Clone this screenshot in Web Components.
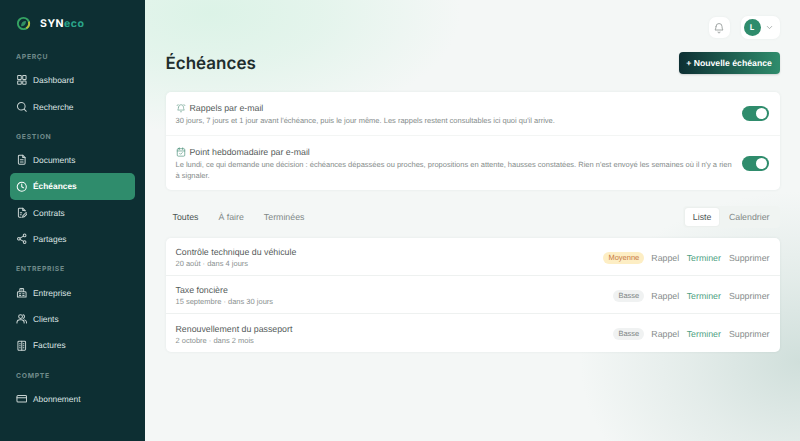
<!DOCTYPE html>
<html lang="fr">
<head>
<meta charset="utf-8">
<title>Échéances</title>
<style>
html, body { margin: 0; height: 100%; }
body { font-family: "Liberation Sans", Arial, sans-serif; overflow: hidden; text-rendering: geometricPrecision; }
</style>
</head>
<body>
<app-shell>
  <side-bar slot="side"></side-bar>
  <top-bar></top-bar>
  <page-head></page-head>
  <settings-card>
    <setting-row icon="bellring" tint="#6a9f8c" label="Rappels par e-mail">30 jours, 7 jours et 1 jour avant l'échéance, puis le jour même. Les rappels restent consultables ici quoi qu'il arrive.</setting-row>
    <setting-row icon="cal" tint="#4a9078" label="Point hebdomadaire par e-mail">Le lundi, ce qui demande une décision : échéances dépassées ou proches, propositions en attente, hausses constatées. Rien n'est envoyé les semaines où il n'y a rien à signaler.</setting-row>
  </settings-card>
  <tab-bar></tab-bar>
  <deadline-list>
    <deadline-row name="Contrôle technique du véhicule" when="20 août · dans 4 jours" level="Moyenne"></deadline-row>
    <deadline-row name="Taxe foncière" when="15 septembre · dans 30 jours" level="Basse"></deadline-row>
    <deadline-row name="Renouvellement du passeport" when="2 octobre · dans 2 mois" level="Basse"></deadline-row>
  </deadline-list>
</app-shell>
<script>
// Icons
const icons = {
  dashboard: `<rect x="3.500" y="3" width="7.500" height="8.500" rx="1"/><rect x="14" y="3" width="7" height="8.500" rx="1"/><rect x="14" y="14.500" width="7" height="7" rx="1"/><rect x="3.500" y="14.500" width="7.500" height="7" rx="1"/>`,
  search: `<circle cx="11" cy="11" r="8"/><path d="M17 17 21.500 21.500"/>`,
  doc: `<path d="M14 2.500H7a2 2 0 0 0-2 2v15a2 2 0 0 0 2 2h10a2 2 0 0 0 2-2V7.500z"/><path d="M14 2.500v5h5M9 12h6M9 16.500h6"/>`,
  clock: `<circle cx="12" cy="12" r="9.500"/><path d="M12 6.500V12l3.500 2"/>`,
  contract: `<path d="M19 8.500V7.500l-5-5H7a2 2 0 0 0-2 2v15a2 2 0 0 0 2 2h4"/><path d="M14 2.500v5h5M21 11.500l-6.500 6.500-1 3.500 3.500-1 6.500-6.500zM9 12h3M9 16h2"/>`,
  share: `<circle cx="18" cy="5" r="2.800"/><circle cx="6" cy="12" r="2.800"/><circle cx="18" cy="19" r="2.800"/><path d="m8.300 10.700 7.400-4.300M8.300 13.300l7.400 4.300"/>`,
  building: `<path d="M3 21v-9a2 2 0 0 1 2-2h14a2 2 0 0 1 2 2v9zM8 10V5a2 2 0 0 1 2-2h4a2 2 0 0 1 2 2v5M7 14h3M14 14h3M7 17.500h3M14 17.500h3M11 6.500h2"/>`,
  users: `<circle cx="9.500" cy="7.500" r="4"/><path d="M2 21v-1a6 6 0 0 1 6-6h3a6 6 0 0 1 6 6v1M15 3.700a4 4 0 0 1 0 7.600M18 14.300a6 6 0 0 1 4 5.700v1"/>`,
  invoice: `<rect x="4" y="2.500" width="16" height="19" rx="2"/><path d="M12 2.500v19M7.500 8h1.500M15 8h1.500M7.500 12h1.500M15 12h1.500M7.500 16h1.500M15 16h1.500"/>`,
  card: `<rect x="2" y="5" width="20" height="14" rx="2.500"/><path d="M2 10h20"/>`,
  bell: `<path d="M6 9a6 6 0 0 1 12 0c0 5 2 7 2 7H4s2-2 2-7"/><path d="M10 20a2 2 0 0 0 4 0"/>`,
  bellring: `<path d="M6 10a6 6 0 0 1 12 0c0 5 2 7 2 7H4s2-2 2-7"/><path d="M10.300 21a2 2 0 0 0 3.400 0M2.500 6.500 5 3.500M21.500 6.500 19 3.500"/>`,
  cal: `<rect x="3" y="4" width="18" height="18" rx="2.500"/><path d="M3 9.500h18M8 2v4M16 2v4M9 15.500l2 2 4-4"/>`,
  chevron: `<path d="m6 9 6 6 6-6"/>`,
};
const svg = (name, size, sw = 1.8) => `<svg width="${size}" height="${size}" viewBox="0 0 24 24" fill="none" stroke="currentColor" stroke-width="${sw}" stroke-linecap="round" stroke-linejoin="round">${icons[name]}</svg>`;

class Base extends HTMLElement {
  render(html) {
    this.attachShadow({ mode: "open" }).innerHTML = html;
  }
}

class AppShell extends Base {
  connectedCallback() {
    this.render(`
<style>
:host { display: flex; width: 800px; height: 441px; overflow: hidden; }
main {
  flex: 1; padding: 15px 20.5px 0; box-sizing: border-box; min-width: 0;
  background:
    radial-gradient(250px 120px at 10% 3%, #dcf3e7 0%, rgba(220,243,231,.65) 45%, rgba(220,243,231,0) 100%),
    radial-gradient(220px 170px at 100% 82%, #d0dfdb 0%, rgba(208,223,219,.45) 50%, rgba(208,223,219,0) 100%),
    #f4f7f6;
}
</style>
<slot name="side"></slot>
<main><slot></slot></main>`);
  }
}

const navGroups = [
  ["APERÇU", [["dashboard", "Dashboard"], ["search", "Recherche"]]],
  ["GESTION", [["doc", "Documents"], ["clock", "Échéances", true], ["contract", "Contrats"], ["share", "Partages"]]],
  ["ENTREPRISE", [["building", "Entreprise"], ["users", "Clients"], ["invoice", "Factures"]]],
  ["COMPTE", [["card", "Abonnement"]]],
];

class SideBar extends Base {
  connectedCallback() {
    const groups = navGroups.map(([title, items]) => `
<section>
  <h4>${title}</h4>
  ${items.map(([ic, label, on]) => `<a class="${on ? "on" : ""}">${svg(ic, 11.5, 2.1)}<span>${label}</span></a>`).join("")}
</section>`).join("");
    this.render(`
<style>
:host { display: block; width: 145px; flex: none; background: #0d2f33; box-sizing: border-box; padding: 14px 10px 0; color: #d5dedd; text-rendering: geometricPrecision; }
.logo { display: flex; align-items: center; gap: 9px; padding: 0 6px; height: 18px; margin-bottom: 18px; font: 700 10.5px "Inter", sans-serif; letter-spacing: .5px; color: #fff; }
.logo b { color: #2aa58a; font-weight: 700; margin-left: -9px; }
section { margin-bottom: 10px; }
h4 { margin: 0; padding: 0 6px; font: 700 6.8px/14px "Inter", sans-serif; letter-spacing: .7px; color: #6f8a8a; }
a { display: flex; align-items: center; gap: 6px; height: 26.4px; padding: 0 5.5px; border-radius: 5px; font: 400 8.4px "Liberation Sans", sans-serif; color: #dbe3e2; }
a svg { flex: none; color: #c8d3d2; }
h4 + a { margin-top: 3px; }
a.on { background: #2f8c6c; color: #fff; font-weight: 700; }
a.on svg { color: #fff; }
</style>
<div class="logo">
  <svg width="15" height="15" viewBox="0 0 24 24" fill="none"><circle cx="12" cy="12" r="9" stroke="#35a463" stroke-width="3"/><path d="M20.500 9a9 9 0 0 1-4 10.500" stroke="#b7bf3c" stroke-width="3"/><path d="M8 16.500c0-5.500 3-8.500 8-8.500 0 5.500-3 8.500-8 8.500z" fill="#2f8f63"/></svg>
  <span>SYN</span><b>eco</b>
</div>
${groups}`);
  }
}

class TopBar extends Base {
  connectedCallback() {
    this.render(`
<style>
:host { display: flex; justify-content: flex-end; align-items: center; gap: 11px; height: 25px; }
.box { background: #fff; border-radius: 7px; display: flex; align-items: center; justify-content: center; box-shadow: 0 0 3px rgba(30,60,50,.05); }
.bell { width: 21px; height: 21px; color: #8b9290; }
.user { width: 39px; height: 23px; gap: 4px; color: #8b9290; box-sizing: border-box; padding-left: 3px; justify-content: flex-start; }
.av { width: 17px; height: 17px; border-radius: 50%; background: #2f8c6c; color: #fff; font: 700 8px/17px "Inter", sans-serif; text-align: center; }
</style>
<div class="box bell">${svg("bell", 12, 1.6)}</div>
<div class="box user"><span class="av">L</span>${svg("chevron", 9, 1.8)}</div>`);
  }
}

class PageHead extends Base {
  connectedCallback() {
    this.render(`
<style>
:host { display: flex; justify-content: space-between; align-items: center; height: 22px; margin: 12px 0 18px; }
h1 { margin: 0; padding-top: 1px; font: 600 17px "Inter", sans-serif; color: #1f2e2e; }
button { border: 0; width: 101px; height: 22px; padding: 0; border-radius: 4px; background: linear-gradient(90deg, #0d2f33, #2f8c6c); color: #fff; font: 700 8.7px "Liberation Sans", sans-serif; box-shadow: 0 1px 2px rgba(0,0,0,.15); text-rendering: geometricPrecision; }
</style>
<h1>Échéances</h1>
<button>+ Nouvelle échéance</button>`);
  }
}

class SettingsCard extends Base {
  connectedCallback() {
    this.render(`
<style>
:host { display: block; background: #fff; border-radius: 5px; box-shadow: 0 0 3px rgba(30,60,50,.07); }
</style>
<slot></slot>`);
  }
}

class SettingRow extends Base {
  connectedCallback() {
    const text = this.textContent;
    this.render(`
<style>
:host { display: flex; align-items: center; gap: 10px; padding: 9.5px 10.5px 9px 10px; }
:host(:not(:last-child)) { border-bottom: 1px solid #f3f5f4; }
.t { flex: 1; min-width: 0; }
.l { display: flex; align-items: center; gap: 4px; font-size: 8.8px; line-height: 13px; color: #555c5b; }
.l svg { color: ${this.getAttribute("tint")}; flex: none; }
p { margin: .5px 0 0; font-size: 7.5px; line-height: 11px; color: #858c8b; }
.sw { width: 27px; height: 15px; border-radius: 8px; background: #2f8c6c; position: relative; flex: none; }
.sw::after { content: ""; position: absolute; right: 2px; top: 2px; width: 11px; height: 11px; border-radius: 50%; background: #fff; }
</style>
<div class="t"><div class="l">${svg(this.getAttribute("icon"), 10, 1.6)}<span>${this.getAttribute("label")}</span></div><p>${text}</p></div>
<div class="sw"></div>`);
  }
}

class TabBar extends Base {
  connectedCallback() {
    this.render(`
<style>
:host { display: flex; justify-content: space-between; align-items: center; height: 22px; margin: 16px 0 10px; font-size: 8.8px; color: #818887; }
.tabs { display: flex; gap: 20px; padding-left: 7px; }
.tabs .on { color: #4c5554; }
.seg { display: flex; background: #f0f4f2; border-radius: 4px; padding: 2px; height: 22px; box-sizing: border-box; align-items: center; }
.seg span { padding: 0 8px 0 10px; line-height: 18px; }
.seg .on { background: #fff; color: #4c5554; border-radius: 3px; padding: 0 7.5px; box-shadow: 0 0 2px rgba(0,0,0,.07); }
</style>
<div class="tabs"><span class="on">Toutes</span><span>À faire</span><span>Terminées</span></div>
<div class="seg"><span class="on">Liste</span><span>Calendrier</span></div>`);
  }
}

class DeadlineList extends Base {
  connectedCallback() {
    this.render(`
<style>
:host { display: block; background: #fff; border-radius: 5px; box-shadow: 0 0 3px rgba(30,60,50,.07); }
</style>
<slot></slot>`);
  }
}

class DeadlineRow extends Base {
  connectedCallback() {
    const level = this.getAttribute("level");
    this.render(`
<style>
:host { display: flex; align-items: center; height: 38px; padding: 2px 10px 0; box-sizing: border-box; }
:host(:not(:last-child)) { border-bottom: 1px solid #eef1f0; }
.t { flex: 1; }
.n { font-size: 8.8px; line-height: 12px; color: #555c5b; }
.w { font-size: 7.5px; line-height: 11px; color: #8a9190; }
.b { font-size: 7.5px; line-height: 12px; padding: 0 5px; border-radius: 6px; margin-right: 7px; }
.Moyenne { background: #fdeec4; color: #c77a45; }
.Basse { background: #f0f2f2; color: #7b8382; }
.a { font-size: 8.8px; color: #858c8b; margin-left: 8px; }
.a.g { color: #4f9f83; margin-left: 7.5px; }
</style>
<div class="t"><div class="n">${this.getAttribute("name")}</div><div class="w">${this.getAttribute("when")}</div></div>
<span class="b ${level}">${level}</span>
<span class="a" style="margin-left:0">Rappel</span><span class="a g">Terminer</span><span class="a">Supprimer</span>`);
  }
}

customElements.define("app-shell", AppShell);
customElements.define("side-bar", SideBar);
customElements.define("top-bar", TopBar);
customElements.define("page-head", PageHead);
customElements.define("settings-card", SettingsCard);
customElements.define("setting-row", SettingRow);
customElements.define("tab-bar", TabBar);
customElements.define("deadline-list", DeadlineList);
customElements.define("deadline-row", DeadlineRow);
</script>
</body>
</html>
